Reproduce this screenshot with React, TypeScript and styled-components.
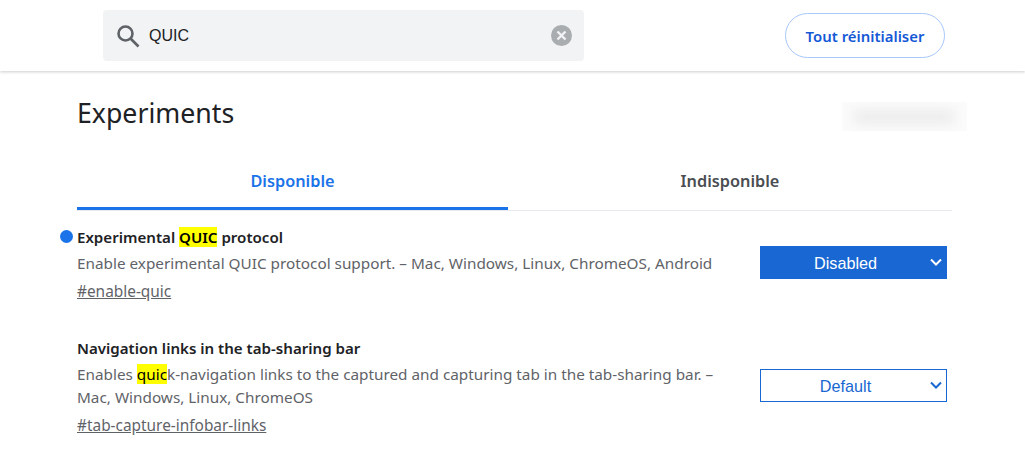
import React from 'react';
import styled, { createGlobalStyle } from 'styled-components';

const Global = createGlobalStyle`
  html, body {
    margin: 0;
    height: 100%;
    background: #fff;
    overflow: hidden;
    font-family: "Noto Sans", "Open Sans", sans-serif;
  }
`;

const Header = styled.header`
  height: 71px;
  box-sizing: border-box;
  display: flex;
  align-items: flex-start;
  padding: 10px 0 0 103px;
  box-shadow: 0 1px 3px rgba(0, 0, 0, 0.2);
`;

const SearchBox = styled.div`
  width: 481px;
  height: 51px;
  box-sizing: border-box;
  background: #f1f3f4;
  border-radius: 4px;
  display: flex;
  align-items: center;
  padding: 0 12px 0 13px;
`;

const SearchText = styled.span`
  flex: 1;
  margin-left: 9px;
  font-family: "Liberation Sans", Arial, sans-serif;
  font-size: 16px;
  color: #202124;
`;

const ResetButton = styled.button`
  width: 160px;
  height: 45px;
  margin: 3px 0 0 201px;
  padding: 0;
  background: #fff;
  border: 1px solid #a8c7fa;
  border-radius: 23px;
  color: #1558d6;
  font-family: inherit;
  font-size: 14.9px;
  font-weight: 600;
`;

const Main = styled.main`
  width: 875px;
  margin-left: 77px;
`;

const TitleRow = styled.div`
  height: 84px;
  display: flex;
  align-items: center;
  justify-content: space-between;
`;

const Title = styled.h1`
  margin: 0 0 2px 0;
  font-size: 26.7px;
  font-weight: 400;
  color: #202124;
`;

const BlurPatch = styled.div`
  width: 125px;
  height: 29px;
  margin: 6px -15px 0 0;
  overflow: hidden;
  background: #fbfbfb;
`;

const BlurInner = styled.div`
  width: 100px;
  height: 14px;
  margin: 8px 0 0 12px;
  background: #ececec;
  filter: blur(6px);
`;

const Tabs = styled.div`
  display: flex;
  height: 55px;
  border-bottom: 1px solid #e8eaed;
  box-sizing: content-box;
`;

const Tab = styled.div<{ $active?: boolean }>`
  box-sizing: border-box;
  height: 55px;
  width: ${p => (p.$active ? '431px' : '444px')};
  display: flex;
  align-items: center;
  justify-content: center;
  padding-bottom: ${p => (p.$active ? '0' : '3px')};
  font-size: 16.3px;
  font-weight: 600;
  color: ${p => (p.$active ? '#1a73e8' : '#4a4d51')};
  border-bottom: ${p => (p.$active ? '3px solid #1a73e8' : '0')};
`;

const Experiment = styled.section<{ $top: number }>`
  position: relative;
  display: flex;
  justify-content: space-between;
  align-items: center;
  margin-top: ${p => p.$top}px;
`;

const Info = styled.div`
  width: 660px;
`;

const Name = styled.h2`
  margin: 0;
  font-size: 15.1px;
  line-height: 21px;
  font-weight: 600;
  color: #202124;
`;

const Dot = styled.span`
  position: absolute;
  left: -17px;
  top: 3px;
  width: 13px;
  height: 13px;
  border-radius: 50%;
  background: #1a73e8;
`;

const Desc = styled.p`
  margin: 4px 0 0;
  font-size: 15.3px;
  line-height: 23px;
  color: #5f6368;
`;

const Anchor = styled.a`
  display: block;
  margin-top: 5px;
  font-size: 15.4px;
  line-height: 23px;
  color: #5f6368;
  text-decoration: underline;
`;

const Mark = styled.mark`
  background: #ffff00;
  color: #000;
`;

const Select = styled.div<{ $on?: boolean }>`
  box-sizing: border-box;
  width: 187px;
  height: 33px;
  margin: 0 5px 5px 0;
  padding: 2px 16px 0 0;
  position: relative;
  display: flex;
  align-items: center;
  justify-content: center;
  font-family: "Liberation Sans", Arial, sans-serif;
  font-size: 16.2px;
  background: ${p => (p.$on ? '#1967d2' : '#fff')};
  color: ${p => (p.$on ? '#fff' : '#1967d2')};
  border: 1px solid #1967d2;
`;

const Chevron = styled.svg`
  position: absolute;
  right: 4px;
  top: 11px;
  width: 12px;
  height: 10px;
`;

const Caret = () => (
  <Chevron viewBox="0 0 12 10">
    <path d="M1 1.5 L6 6.5 L11 1.5" fill="none" stroke="currentColor" strokeWidth="2" />
  </Chevron>
);

const App = () => {
  return (
    <>
      <Global />
      <Header>
        <SearchBox>
          <svg width="24" height="24" viewBox="0 0 24 24">
            <circle cx="9.5" cy="9.5" r="7" fill="none" stroke="#5f6368" strokeWidth="2.6" />
            <path d="M14.5 14.5 L22.5 22.5" stroke="#5f6368" strokeWidth="2.6" />
          </svg>
          <SearchText>QUIC</SearchText>
          <svg width="21" height="21" viewBox="0 0 21 21">
            <circle cx="10.5" cy="10.5" r="10.5" fill="#aaadb0" />
            <path d="M6.5 6.5 L14.5 14.5 M14.5 6.5 L6.5 14.5" stroke="#f1f3f4" strokeWidth="2.4" />
          </svg>
        </SearchBox>
        <ResetButton>Tout réinitialiser</ResetButton>
      </Header>
      <Main>
        <TitleRow>
          <Title>Experiments</Title>
          <BlurPatch><BlurInner /></BlurPatch>
        </TitleRow>
        <Tabs>
          <Tab $active>Disponible</Tab>
          <Tab>Indisponible</Tab>
        </Tabs>
        <Experiment $top={16}>
          <Dot />
          <Info>
            <Name>Experimental <Mark>QUIC</Mark> protocol</Name>
            <Desc>Enable experimental QUIC protocol support. – Mac, Windows, Linux, ChromeOS, Android</Desc>
            <Anchor>#enable-quic</Anchor>
          </Info>
          <Select $on>Disabled<Caret /></Select>
        </Experiment>
        <Experiment $top={35}>
          <Info>
            <Name>Navigation links in the tab-sharing bar</Name>
            <Desc>Enables <Mark>quic</Mark>k-navigation links to the captured and capturing tab in the tab-sharing bar. – Mac, Windows, Linux, ChromeOS</Desc>
            <Anchor>#tab-capture-infobar-links</Anchor>
          </Info>
          <Select>Default<Caret /></Select>
        </Experiment>
      </Main>
    </>
  );
};

export default App;
